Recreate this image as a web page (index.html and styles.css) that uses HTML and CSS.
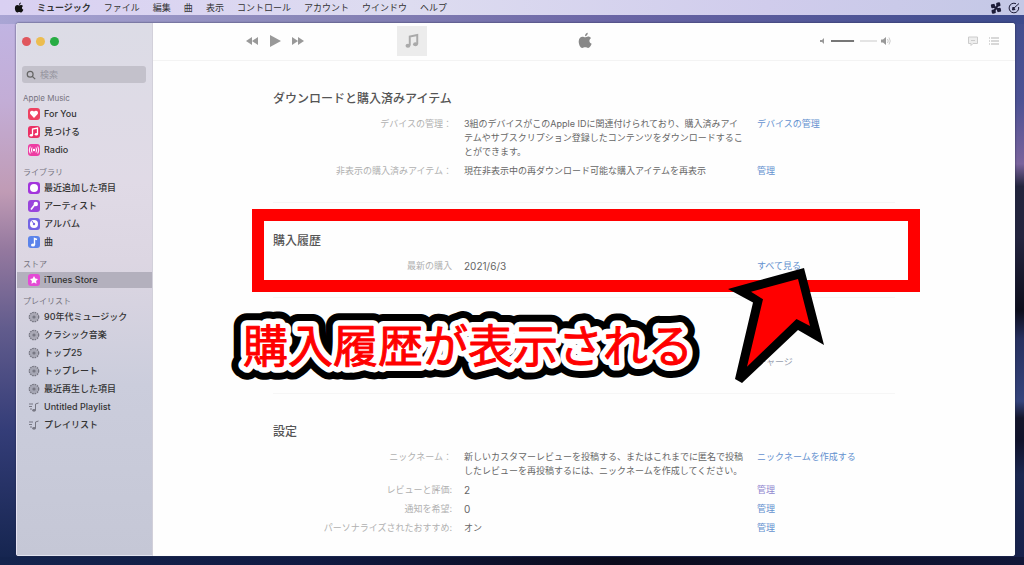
FILE: index.html
```html
<!DOCTYPE html>
<html lang="ja">
<head>
<meta charset="utf-8">
<meta name="viewport" content="width=device-width, initial-scale=1">
<title>ミュージック</title>
<link rel="stylesheet" href="styles.css">
</head>
<body>
<svg class="defs" aria-hidden="true">
  <symbol id="apple" viewBox="0 0 20 24"><path d="M14 1c0 3-2 5-4 5 0-3 2-5 4-5zM10 7.500c1 0 2.500-1.200 4.500-1.200 1.600 0 3.200.8 4.200 2.200-3.500 2.200-3 6.800.8 8.200-1 2.800-2.800 6-5 6-1.600 0-2.200-1-4.200-1s-2.700 1-4.200 1C3.500 22.700 1 18 1 13.500 1 9 3.600 6.500 6.300 6.500c1.700 0 2.900 1 3.700 1z"/></symbol>
  <symbol id="note" viewBox="0 0 12 12"><path d="M4.500 9V3L9.500 2v6" fill="none" stroke="currentColor" stroke-width="1.300"/><ellipse cx="3.300" cy="9.200" rx="1.600" ry="1.300"/><ellipse cx="8.300" cy="8.200" rx="1.600" ry="1.300"/></symbol>
  <symbol id="gear" viewBox="0 0 12 12"><circle cx="6" cy="6" r="4.600" fill="none" stroke="currentColor" stroke-width="1.500" stroke-dasharray="1.800 .6"/><circle cx="6" cy="6" r="3.800" opacity=".45"/><circle cx="6" cy="6" r="1.600"/></symbol>
  <symbol id="list" viewBox="0 0 12 12"><path d="M1 3h4M1 5.500h3M2 8h2M7.500 9V3l3-1" fill="none" stroke="currentColor"/><ellipse cx="6" cy="9.300" rx="1.800" ry="1.400"/></symbol>
</svg>

<div class="desktop">
  <nav class="menubar" aria-label="メニュー">
    <button class="menu menu-logo" aria-label="Apple"><svg><use href="#apple"/></svg></button>
    <button class="menu menu-app">ミュージック</button>
    <button class="menu">ファイル</button>
    <button class="menu">編集</button>
    <button class="menu">曲</button>
    <button class="menu">表示</button>
    <button class="menu">コントロール</button>
    <button class="menu">アカウント</button>
    <button class="menu">ウインドウ</button>
    <button class="menu">ヘルプ</button>
    <span class="tray">
      <svg viewBox="0 0 12 12" aria-hidden="true"><g transform="rotate(-12 6 6)"><rect x="1.500" y="1.500" width="4" height="4" rx="1"/><rect x="7" y="1" width="4" height="4" rx="1"/><rect x="1" y="7" width="4" height="4" rx="1"/><rect x="6.500" y="6.500" width="4" height="4" rx="1"/><path d="M3 3l6 6M9 3L3 9" stroke="currentColor" stroke-width="2"/></g></svg>
      <svg viewBox="0 0 12 12" aria-hidden="true"><path d="M8 1.700A4.800 4.800 0 1 0 10.600 5" fill="none" stroke="currentColor"/><path d="M5.500 6.500l5.500-5M5 5l2 2.500-2.500.5z" stroke="currentColor"/></svg>
    </span>
  </nav>

  <div class="window">
    <aside class="sidebar">
      <div class="lights"><button class="light red" aria-label="閉じる"></button><button class="light yellow" aria-label="しまう"></button><button class="light green" aria-label="拡大"></button></div>
      <label class="search">
        <svg viewBox="0 0 12 12" aria-hidden="true"><circle cx="5" cy="5" r="3.500"/><path d="M7.600 7.600L11 11"/></svg>
        <input type="search" placeholder="検索" aria-label="検索">
      </label>
      <h2 class="group">Apple Music</h2>
      <ul class="items">
        <li><a href="#"><svg class="tile heart" viewBox="0 0 12 12"><path d="M6 10L2.300 6C1 4 3.500 1.300 6 3.500 8.500 1.300 11 4 9.700 6z"/></svg>For You</a></li>
        <li><a href="#"><svg class="tile browse" viewBox="0 0 12 12"><use href="#note"/></svg>見つける</a></li>
        <li><a href="#"><svg class="tile radio" viewBox="0 0 12 12"><circle cx="6" cy="6" r="1.300"/><path d="M4 3.500Q2.800 6 4 8.500M8 3.500Q9.200 6 8 8.500M2.200 2.500Q.3 6 2.200 9.500M9.800 2.500Q11.700 6 9.800 9.500" fill="none" stroke="currentColor"/></svg>Radio</a></li>
      </ul>
      <h2 class="group">ライブラリ</h2>
      <ul class="items">
        <li><a href="#"><svg class="tile recent" viewBox="0 0 12 12"><circle cx="6" cy="6" r="4"/></svg>最近追加した項目</a></li>
        <li><a href="#"><svg class="tile artist" viewBox="0 0 12 12"><path d="M3 9.500L6.500 5" stroke="currentColor" stroke-width="1.600"/><circle cx="7.800" cy="4" r="2.200"/></svg>アーティスト</a></li>
        <li><a href="#"><svg class="tile album" viewBox="0 0 12 12"><circle cx="6" cy="6" r="4"/><path d="M6 6L4 3" stroke="#7464e4"/><circle cx="6" cy="6" r="1.200" fill="#7464e4"/></svg>アルバム</a></li>
        <li><a href="#"><svg class="tile song" viewBox="0 0 12 12"><path d="M6.500 9V2.500l2.500 1" fill="none" stroke="currentColor" stroke-width="1.400"/><ellipse cx="5" cy="9" rx="2" ry="1.500"/></svg>曲</a></li>
      </ul>
      <h2 class="group">ストア</h2>
      <ul class="items store-items">
        <li><a href="#" class="current" aria-current="page"><svg class="tile store" viewBox="0 0 12 12"><path d="M6 2l1.300 2.400 2.700.5-1.900 2 .4 2.800L6 8.500 3.500 9.700l.4-2.800-1.900-2 2.700-.5z"/></svg>iTunes Store</a></li>
      </ul>
      <h2 class="group">プレイリスト</h2>
      <ul class="items">
        <li><a href="#"><svg class="glyph"><use href="#gear"/></svg>90年代ミュージック</a></li>
        <li><a href="#"><svg class="glyph"><use href="#gear"/></svg>クラシック音楽</a></li>
        <li><a href="#"><svg class="glyph"><use href="#gear"/></svg>トップ25</a></li>
        <li><a href="#"><svg class="glyph"><use href="#gear"/></svg>トップレート</a></li>
        <li><a href="#"><svg class="glyph"><use href="#gear"/></svg>最近再生した項目</a></li>
        <li><a href="#"><svg class="glyph"><use href="#list"/></svg>Untitled Playlist</a></li>
        <li><a href="#"><svg class="glyph"><use href="#list"/></svg>プレイリスト</a></li>
      </ul>
    </aside>

    <main class="main">
      <header class="player">
        <div class="transport">
          <button aria-label="前へ"><svg viewBox="0 0 14 12"><path d="M7 2v8L1 6zM13 2v8L7 6z"/></svg></button>
          <button class="play" aria-label="再生"><svg viewBox="0 0 14 14"><path d="M2 1l11 6-11 6z"/></svg></button>
          <button aria-label="次へ"><svg viewBox="0 0 14 12"><path d="M1 2v8l6-4zM7 2v8l6-4z"/></svg></button>
        </div>
        <div class="display">
          <span class="art"><svg><use href="#note"/></svg></span>
          <svg class="logo" aria-hidden="true"><use href="#apple"/></svg>
        </div>
        <div class="volume">
          <svg viewBox="0 0 10 10" aria-hidden="true"><path d="M3 4h2l2-2v6L5 6H3z"/></svg>
          <input type="range" aria-label="音量" value="58">
          <svg viewBox="0 0 10 10" aria-hidden="true"><path d="M0 3.500h2L5 1v8L2 6.500H0z"/><path d="M6.500 3q1.500 2 0 4M8 1.500q2.500 3.500 0 7" fill="none" stroke="currentColor" opacity=".5"/></svg>
        </div>
        <div class="tools">
          <button aria-label="歌詞"><svg viewBox="0 0 12 12"><path d="M1.500 2h9v6.500H6L4 10.500v-2H1.500z" fill="#eee" stroke="currentColor"/><path d="M4 5.500h4" stroke="currentColor"/></svg></button>
          <button aria-label="次に再生"><svg viewBox="0 0 12 12"><path d="M1 3h1M1 6h1M1 9h1M3 3h8M3 6h8M3 9h8" stroke="currentColor" stroke-width="1.400"/></svg></button>
        </div>
      </header>

      <div class="account">
        <section class="section">
          <h1>ダウンロードと購入済みアイテム</h1>
          <div class="row"><span class="label">デバイスの管理：</span><p>3組のデバイスがこのApple IDに関連付けられており、購入済みアイ<br>テムやサブスクリプション登録したコンテンツをダウンロードするこ<br>とができます。</p><a href="#">デバイスの管理</a></div>
          <div class="row"><span class="label">非表示の購入済みアイテム：</span><p>現在非表示中の再ダウンロード可能な購入アイテムを再表示</p><a href="#">管理</a></div>
        </section>
        <section class="section">
          <h1>購入履歴</h1>
          <div class="row"><span class="label">最新の購入</span><p class="big">2021/6/3</p><a href="#">すべて見る</a></div>
        </section>
        <section class="section untitled">
          <div class="row"><a class="last" href="#">チャージ</a></div>
        </section>
        <section class="section">
          <h1>設定</h1>
          <div class="row"><span class="label">ニックネーム：</span><p>新しいカスタマーレビューを投稿する、またはこれまでに匿名で投稿<br>したレビューを再投稿するには、ニックネームを作成してください。</p><a href="#">ニックネームを作成する</a></div>
          <div class="row"><span class="label">レビューと評価:</span><p class="big">2</p><a class="visited" href="#">管理</a></div>
          <div class="row"><span class="label">通知を希望:</span><p class="big">0</p><a href="#">管理</a></div>
          <div class="row"><span class="label">パーソナライズされたおすすめ:</span><p>オン</p><a href="#">管理</a></div>
        </section>
      </div>
    </main>
  </div>

  <div class="frame"></div>
  <svg class="caption" viewBox="0 0 480 80" role="img" aria-label="購入履歴が表示される">
    <defs><text id="caption-text" x="15" y="56">購入履歴が表示される</text></defs>
    <use class="outer" href="#caption-text"/>
    <use class="inner" href="#caption-text"/>
    <use class="fill" href="#caption-text"/>
  </svg>
  <svg class="arrow" viewBox="0 0 100 118" aria-hidden="true">
    <path d="M79 3L3 24l25 13.500-18 76.500 7 4 56-53 26 15z" fill="#000"/>
    <path d="M73 14L26 26.700l12 7.600-16 67.400L71.500 54 85 61z" fill="#f00"/>
  </svg>
</div>
</body>
</html>
```

FILE: styles.css
```css
* { box-sizing: border-box; }

body {
  margin: 0;
  font-family: Inter, "Noto Sans CJK JP", sans-serif;
  font-size: 9px;
  line-height: 14px;
  color: #555;
}

button { padding: 0; border: 0; background: none; font: inherit; color: inherit; }
a { color: inherit; text-decoration: none; }
h1, h2, p, ul { margin: 0; padding: 0; }
ul { list-style: none; }
svg { display: block; flex: none; fill: currentColor; }
.defs { position: absolute; width: 0; height: 0; }

.desktop {
  position: relative;
  display: flex;
  flex-direction: column;
  min-height: 100vh;
  overflow: hidden;
  background:
    linear-gradient(90deg, #a9a5d4, #8a87b8 30%, #6a65a5 60%, #3c4a8c) 0 0 / 100% 24px no-repeat,
    linear-gradient(#c0b6e6, #c3add6 18%, #c09bb5 34%, #95799f 44%, #625c8d 58%, #343d78 76%, #14244e) 0 0 / 50% 100% no-repeat,
    linear-gradient(#3f4c8c, #4d5294 18%, #7a639c 29%, #22243c 33%, #24243e 42%, #0d0e1c 55%, #27305f 60%, #35447c 71%, #14152a 74%, #10122a 78%, #1b2750 84%, #16204a) 100% 0 / 50% 100% no-repeat;
}
.desktop::after {
  content: "";
  position: absolute;
  inset: auto 0 0;
  height: 8px;
  background: linear-gradient(90deg, #14244e, #101a42 30%, #0b0b1c 60%, #101638);
}

.menubar {
  display: flex;
  align-items: center;
  gap: 13px;
  height: 15px;
  padding: 0 4px 0 14px;
  background: linear-gradient(90deg, #d9d0f2, #dddcf0 40%, #d0ccec 75%, #c4c8e6);
  color: #333;
}
.menu { white-space: nowrap; }
.menu-app { font-weight: 700; }
.menu-logo svg { width: 10px; height: 11px; color: #111; }
.tray { display: flex; gap: 6px; margin-left: auto; color: #1c1c38; }
.tray svg { width: 12px; height: 12px; }

.window {
  position: relative;
  z-index: 1;
  flex: 1;
  display: flex;
  margin: 8px 9px 9px 16px;
  border-radius: 3px;
  overflow: hidden;
  background: #fefefe;
  box-shadow: 0 0 2px #222846;
}

.sidebar {
  flex: 0 0 137px;
  border-left: 1px solid #e6e3f2;
  border-right: 1px solid #d2d0da;
  border-bottom: 1px solid #e2e4f0;
  background: linear-gradient(#dcdce6, #e0dae6 30%, #dcd6e2 45%, #cbcddc 68%, #c5c7d6);
  color: #333;
}
.lights { display: flex; gap: 5px; padding: 14px 5px 20px; }
.light { width: 9px; height: 9px; border-radius: 50%; }
.red { background: #e0565d; }
.yellow { background: #ecbd50; }
.green { background: #27ac43; }

.search {
  display: flex;
  align-items: center;
  gap: 4px;
  height: 17px;
  margin: 0 6px 9px 5px;
  padding: 0 4px;
  border-radius: 3px;
  background: #c3c1cb;
}
.search svg { width: 10px; height: 10px; fill: none; stroke: #666; stroke-width: 1.500; }
.search input { width: 100%; min-width: 0; padding: 0; border: 0; outline: 0; background: none; font: inherit; }
.search input::placeholder { color: #96959f; opacity: 1; }

.group { height: 13px; padding-left: 6px; font-size: 8px; line-height: 13px; font-weight: 400; color: #77747f; }
.items { margin-bottom: 7px; }
.items a { display: flex; align-items: center; gap: 4px; height: 18px; padding-left: 11px; font-weight: 500; white-space: nowrap; }
.store-items { padding-top: 1px; }
.items .current { height: 16px; background: #b3b0bd; }
.tile { width: 12px; height: 12px; border-radius: 3px; color: #fff; }
.heart { background: #ee4262; }
.browse { background: #ec2f64; }
.radio { background: #ed3ca2; }
.recent { background: #a335dc; }
.artist { background: #9a45dc; }
.album { background: #7464e4; }
.song { background: #5b83ea; }
.store { background: #e44bd5; }
.glyph { width: 12px; height: 12px; color: #777783; }

.main { flex: 1; min-width: 0; background: #fefefe; }
.player {
  display: grid;
  grid-template-columns: 244px 1fr 150px 48px;
  align-items: center;
  height: 38px;
  padding-bottom: 2px;
  border-bottom: 1px solid #f3f3f3;
  color: #999;
}
.transport { display: flex; align-items: center; gap: 9px; padding-left: 92px; }
.transport svg { width: 14px; height: 12px; }
.transport .play svg { height: 14px; }
.display { display: flex; align-items: center; }
.art { padding: 6px; background: #ececec; color: #aaa; }
.art svg { width: 18px; height: 18px; }
.logo { width: 14px; height: 17px; margin: 0 auto 0 151px; color: #888; }
.volume { display: flex; align-items: center; gap: 4px; }
.volume svg { width: 10px; height: 10px; }
.volume input {
  appearance: none;
  width: 46px;
  height: 2px;
  margin: 0;
  background: linear-gradient(90deg, #777 52%, #e4e4e4 52%);
}
.volume input::-webkit-slider-thumb { appearance: none; width: 6px; height: 6px; border-radius: 50%; background: #fefefe; }
.tools { display: flex; gap: 9px; color: #ccc; }
.tools svg { width: 12px; height: 12px; }

.account { max-width: 622px; margin: 0 auto; }
.section { padding: 29px 0 24px; }
.section:last-child { padding-bottom: 16px; }
.section + .section { border-top: 1px solid #f6f6f6; }
.section h1 { margin-bottom: 9px; font-size: 12px; line-height: 18px; font-weight: 500; color: #555; }
.row { display: grid; grid-template-columns: 179px 281px 1fr; gap: 12px; }
.row + .row { margin-top: 5px; }
.row p { white-space: nowrap; color: #666; }
.row .big { font-size: 10px; }
.row .label { text-align: right; color: #b0b0b0; }
.row a { justify-self: start; color: #6390cf; }
.row a.last { grid-column: 3; color: #999fae; }
.row a.visited { color: #8f86cf; }
.section.untitled { padding-top: 57px; }

.frame {
  position: absolute;
  z-index: 2;
  top: 209px;
  left: 252px;
  width: 668px;
  height: 83px;
  border: 12px solid #f00;
}
.caption {
  position: absolute;
  z-index: 2;
  top: 307px;
  left: 228px;
  width: 480px;
  height: 80px;
  font-family: "Noto Sans CJK JP", sans-serif;
  font-size: 45px;
  stroke-linejoin: round;
}
.outer { fill: #000; stroke: #000; stroke-width: 26px; }
.inner { fill: #fff; stroke: #fff; stroke-width: 12px; }
.fill { fill: #f00; stroke: #f00; stroke-width: 1px; }
.arrow { position: absolute; z-index: 3; top: 265px; left: 725px; width: 100px; height: 118px; }
```
